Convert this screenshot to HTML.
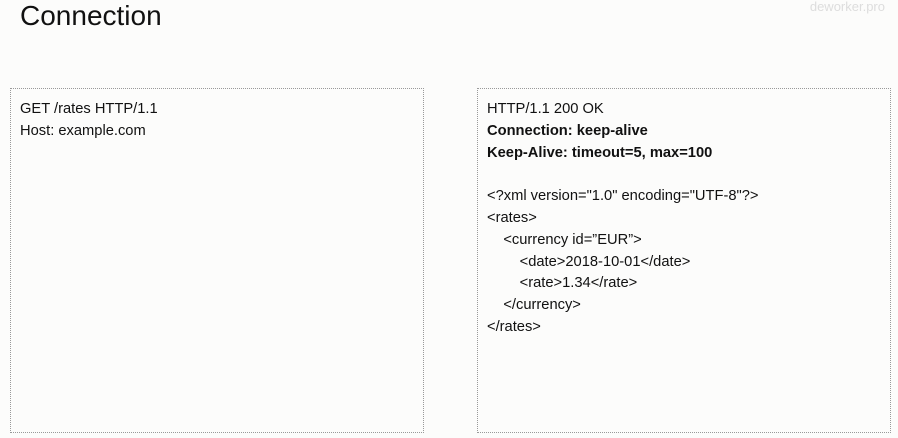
<!DOCTYPE html>
<html><head><style>
body{margin:0;width:898px;height:438px;background:#fcfcfb;font-family:"Liberation Sans",sans-serif;color:#111;position:relative;overflow:hidden}
h1{position:absolute;left:20px;top:0px;margin:0;font-weight:normal;font-size:28px}
.wm{position:absolute;right:13px;top:-1px;font-size:13px;color:#ddd}
.box{position:absolute;top:88px;height:345px;border:1px dotted #999;box-sizing:border-box;padding:10px 9px;font-size:14.7px;line-height:21.8px;white-space:pre}
b{font-weight:bold}
</style></head><body>
<h1>Connection</h1>
<div class="wm">deworker.pro</div>
<div class="box" style="left:10px;width:414px">GET /rates HTTP/1.1
Host: example.com</div>
<div class="box" style="left:477px;width:414px">HTTP/1.1 200 OK
<b>Connection: keep-alive</b>
<b>Keep-Alive: timeout=5, max=100</b>

&lt;?xml version="1.0" encoding="UTF-8"?&gt;
&lt;rates&gt;
    &lt;currency id=”EUR”&gt;
        &lt;date&gt;2018-10-01&lt;/date&gt;
        &lt;rate&gt;1.34&lt;/rate&gt;
    &lt;/currency&gt;
&lt;/rates&gt;</div>
</body></html>
